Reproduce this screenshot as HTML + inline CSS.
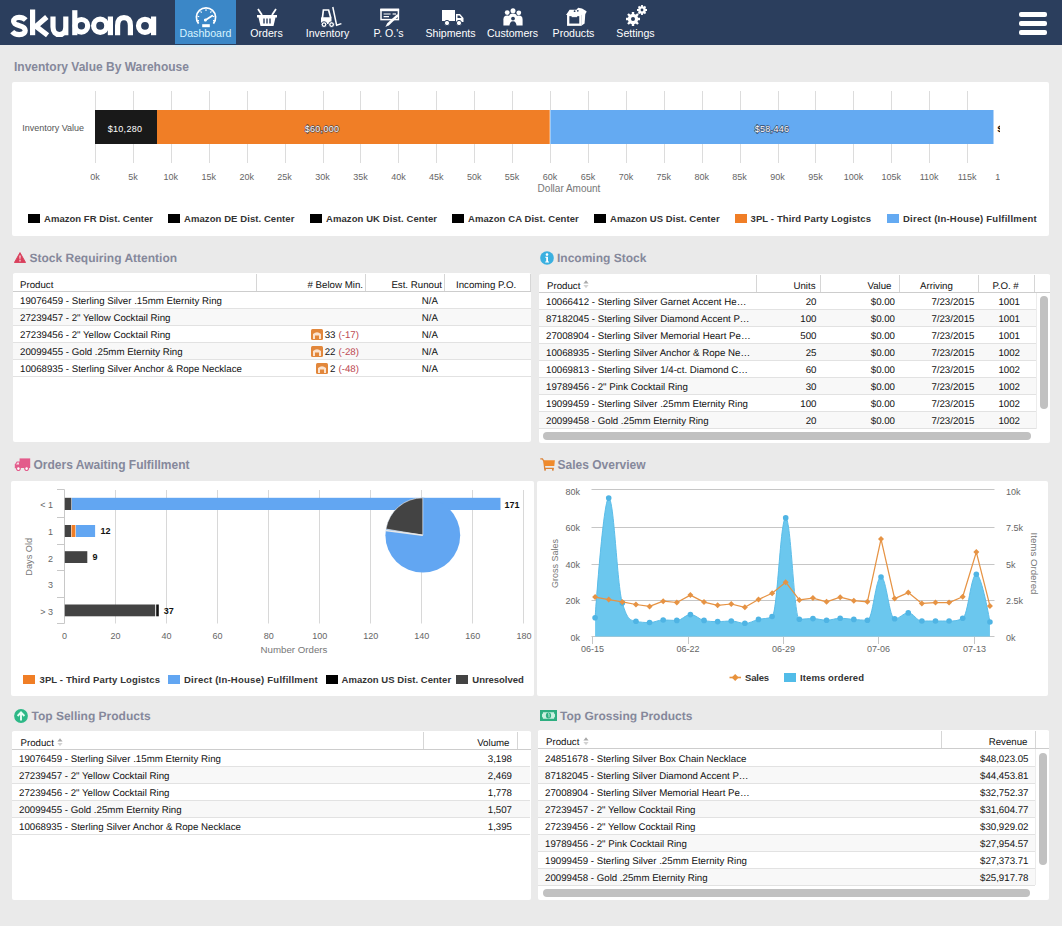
<!DOCTYPE html>
<html><head><meta charset="utf-8">
<style>
*{box-sizing:border-box;margin:0;padding:0}
html,body{width:1062px;height:926px;overflow:hidden;background:#eaeaea;font-family:"Liberation Sans",sans-serif;color:#222}
.abs{position:absolute}
#nav{position:absolute;left:0;top:0;width:1062px;height:45px;background:#2b3e5d}
.tab{position:absolute;top:0;width:61px;height:44px;color:#fff;font-size:10.6px;text-align:center}
.tab span{position:absolute;left:0;right:0;top:27px;line-height:12px;white-space:nowrap}
.tab svg{position:absolute}
.logo{position:absolute;left:10px;top:-1px;font-weight:bold;font-size:37px;color:#fff;letter-spacing:-0.6px}
.ham{position:absolute;left:1019px;width:28px;height:5px;background:#fff;border-radius:2px}
.title{position:absolute;font-weight:bold;font-size:12px;color:#85889b;white-space:nowrap;line-height:14px}
.panel{position:absolute;background:#fff;border-radius:2px}
.t{position:absolute;white-space:nowrap}
.lg{position:absolute;font-weight:bold;font-size:9.5px;color:#333;white-space:nowrap;line-height:11px}
.sq{position:absolute;width:12px;height:9px}
.tbl{position:absolute;font-size:9.7px;color:#111;text-rendering:geometricPrecision}
.row{position:absolute;left:0;height:17px;border-bottom:1px solid #dedede}
.row.alt{background:#f9f9f9}
.c{position:absolute;top:0;line-height:17px;white-space:nowrap}
.hd{position:absolute;top:0;height:17px;border-bottom:1px solid #cfcfcf;background:#fff}
.vd{position:absolute;top:0;width:1px;height:17px;background:#dadada}
.r{text-align:right}
.red{color:#c9403a}
.gar{position:absolute;width:12px;height:11px;background:#e4883a;border-radius:2px}
.scr{position:absolute;background:#c1c1c1;border-radius:5px}
</style></head><body>
<div id="nav">
  <svg class="abs" style="left:0;top:0" width="170" height="45" viewBox="0 0 170 45"><g fill="none" stroke="#fff" stroke-width="5.2" stroke-linecap="butt">
<path d="M25.8 20 C24 18.2 21.6 17.3 19 17.3 C15.6 17.3 13.6 19 13.6 21.3 C13.6 23.8 16.2 24.8 19.6 25.7 C23 26.6 25.2 27.9 25.2 30.6 C25.2 33.1 23 34.6 19.2 34.6 C16.2 34.6 13.8 33.5 12.2 31.6"/>
<path d="M32.6 9.5 V35.2"/><path d="M46.8 17 L36 26.3 L47.6 35.2"/>
<path d="M53 16.5 V27 C53 32 55.8 34.5 59.4 34.5 C63 34.5 65.8 32 65.8 27 V16.5 M65.8 20 V35.2"/>
<path d="M74.8 10.2 V35.2"/><circle cx="81.4" cy="25.8" r="6.3"/>
<circle cx="100.2" cy="25.8" r="6.6"/><path d="M110.4 16.5 V35.2"/>
<path d="M117.6 35.2 V25.5 C117.6 19.8 120.4 17.6 124 17.6 C127.6 17.6 130.4 19.8 130.4 25.5 V35.2"/>
<circle cx="145" cy="25.8" r="6.5"/><path d="M153.6 16.5 V35.2"/>
</g></svg>
  <div class="tab" style="left:175px;background:#3b87c7;width:61px;color:#d8f4ff"><svg style="left:20px;top:7px" width="22" height="21" viewBox="0 0 22 21"><path d="M3.6 16.6 A9.6 9.6 0 1 1 18.4 16.6" fill="none" stroke="#fff" stroke-width="1.7"/><g stroke="#fff" stroke-width="1.1"><path d="M11 2.2 V4 M5.6 4.4 L6.6 5.6 M16.4 4.4 L15.4 5.6 M2.6 9.2 L4.2 9.8 M19.4 9.2 L17.8 9.8 M2.3 13.6 H4 M19.7 13.6 H18"/></g><path d="M10.2 13.2 L17.2 8.8" stroke="#fff" stroke-width="1.9" stroke-linecap="round"/><circle cx="10.4" cy="13" r="1.5" fill="#fff"/><rect x="7.2" y="17.2" width="7.6" height="3" fill="#fff"/></svg><span>Dashboard</span></div>
  <div class="tab" style="left:236px"><svg style="left:20px;top:8px" width="22" height="18" viewBox="0 0 22 18"><path d="M6 7 L2 1 M16 7 L20 1" stroke="#fff" stroke-width="1.8"/><path d="M1 7 H21 V9.5 H19.5 L17.5 18 H4.5 L2.5 9.5 H1 Z" fill="#fff"/><path d="M8 10.5 V15.5 M11 10.5 V15.5 M14 10.5 V15.5" stroke="#2b3e5d" stroke-width="1.4"/></svg><span>Orders</span></div>
  <div class="tab" style="left:297px"><svg style="left:23px;top:6px" width="22" height="22" viewBox="0 0 22 22"><path d="M2.4 12 L3.4 4 H8.6 L10.8 12" fill="none" stroke="#fff" stroke-width="1.7"/><rect x="1" y="11.2" width="10.5" height="6.8" rx="0.8" fill="#fff"/><circle cx="4" cy="18.6" r="2.9" fill="#fff" stroke="#2b3e5d" stroke-width="0.9"/><circle cx="11.6" cy="18.6" r="2.9" fill="#fff" stroke="#2b3e5d" stroke-width="0.9"/><circle cx="4" cy="18.6" r="1.1" fill="#2b3e5d"/><circle cx="11.6" cy="18.6" r="1.1" fill="#2b3e5d"/><path d="M12.8 1 L16.6 19.2 L21.4 17.6" fill="none" stroke="#fff" stroke-width="1.5"/></svg><span>Inventory</span></div>
  <div class="tab" style="left:358px"><svg style="left:22px;top:8px" width="20" height="20" viewBox="0 0 20 20"><rect x="1" y="1.6" width="17.4" height="10" fill="none" stroke="#fff" stroke-width="1.5"/><rect x="0.3" y="0.6" width="18.8" height="2.6" fill="#fff"/><path d="M3.6 6 H10.6 M3.6 8.6 H9" stroke="#fff" stroke-width="1.2"/><path d="M12.6 6 H16" stroke="#fff" stroke-width="1.2"/><path d="M17.4 7.6 L8.4 16" stroke="#fff" stroke-width="2.6" stroke-linecap="round"/><path d="M7.2 15.2 L9.2 17 L5.4 19 Z" fill="#fff"/></svg><span>P. O.'s</span></div>
  <div class="tab" style="left:420px"><svg style="left:22px;top:10px" width="22" height="16" viewBox="0 0 22 16"><rect x="0" y="0" width="13" height="11" fill="#fff"/><path d="M14 4 H18 L21.5 8 V12 H14 Z" fill="#fff"/><path d="M15.5 5.5 H17.5 L19.5 8 H15.5 Z" fill="#2b3e5d"/><circle cx="5" cy="13" r="2.6" fill="#fff" stroke="#2b3e5d" stroke-width="1"/><circle cx="17" cy="13" r="2.6" fill="#fff" stroke="#2b3e5d" stroke-width="1"/></svg><span>Shipments</span></div>
  <div class="tab" style="left:482px"><svg style="left:21px;top:8px" width="20" height="19" viewBox="0 0 20 19"><g fill="#fff"><circle cx="4.2" cy="4.6" r="2.4"/><circle cx="15.8" cy="4.8" r="2.4"/><circle cx="10" cy="2.8" r="2.5"/><path d="M0.4 17.6 V11.6 Q0.4 7.4 4.2 7.4 Q8 7.4 8 11.6 V17.6 Z"/><path d="M12 17.6 V11.8 Q12 7.6 15.8 7.6 Q19.6 7.6 19.6 11.8 V17.6 Z"/><path d="M5.8 16 V9.6 Q5.8 5.6 10 5.6 Q14.2 5.6 14.2 9.6 V16 Z"/></g><g fill="#2b3e5d"><circle cx="10" cy="10.6" r="1.9"/><path d="M6.4 19 Q6.4 13.2 10 13.2 Q13.6 13.2 13.6 19 Z"/></g></svg><span>Customers</span></div>
  <div class="tab" style="left:543px"><svg style="left:22px;top:7px" width="23" height="20" viewBox="0 0 23 20"><rect x="3.2" y="8" width="12.2" height="9.7" fill="none" stroke="#fff" stroke-width="2.3"/><path d="M16.4 7 L20.4 5.4 L19.6 16.4 L16.4 18.8 Z" fill="#fff"/><path d="M1 8 L4.6 2.8 H11.4 L13.2 0.8 L17 1.6 L21.6 4.2 L21 6.2 L16.4 8 Z" fill="#fff"/><circle cx="9.6" cy="4.2" r="0.9" fill="#2b3e5d"/><circle cx="12.8" cy="3.8" r="0.9" fill="#2b3e5d"/><path d="M6.6 9.6 H12.2" stroke="#fff" stroke-width="1.1"/></svg><span>Products</span></div>
  <div class="tab" style="left:605px"><svg style="left:20px;top:4px" width="23" height="23" viewBox="0 0 23 23"><g fill="#fff"><circle cx="8" cy="15" r="5.2"/><circle cx="17" cy="6" r="3.8"/></g><g stroke="#fff" stroke-width="2.4"><path d="M8 8 V22 M1 15 H15 M3 10 L13 20 M13 10 L3 20"/></g><g stroke="#fff" stroke-width="1.8"><path d="M17 1 V11 M12 6 H22 M13.5 2.5 L20.5 9.5 M20.5 2.5 L13.5 9.5"/></g><circle cx="8" cy="15" r="2" fill="#2b3e5d"/><circle cx="17" cy="6" r="1.4" fill="#2b3e5d"/></svg><span>Settings</span></div>
  <div class="abs" style="left:175px;top:45px;width:61px;height:2px;background:#d9ecf4"></div><div class="ham" style="top:12px"></div><div class="ham" style="top:21px"></div><div class="ham" style="top:30px"></div>
</div>

<!-- Inventory value by warehouse -->
<div class="title" style="left:14px;top:60px">Inventory Value By Warehouse</div>
<div class="panel" style="left:12px;top:82px;width:1037px;height:154px"></div>
<svg class="abs" style="left:0;top:0" width="1062" height="240" font-family="Liberation Sans, sans-serif"><defs><clipPath id="clip1"><rect x="0" y="0" width="1000" height="240"/></clipPath></defs>
  <g stroke="#dcdcdc" stroke-width="1"><line x1="95.5" y1="91" x2="95.5" y2="163"/><line x1="133.5" y1="91" x2="133.5" y2="163"/><line x1="171.5" y1="91" x2="171.5" y2="163"/><line x1="209.5" y1="91" x2="209.5" y2="163"/><line x1="247.5" y1="91" x2="247.5" y2="163"/><line x1="285.5" y1="91" x2="285.5" y2="163"/><line x1="323.5" y1="91" x2="323.5" y2="163"/><line x1="360.5" y1="91" x2="360.5" y2="163"/><line x1="398.5" y1="91" x2="398.5" y2="163"/><line x1="436.5" y1="91" x2="436.5" y2="163"/><line x1="474.5" y1="91" x2="474.5" y2="163"/><line x1="512.5" y1="91" x2="512.5" y2="163"/><line x1="550.5" y1="91" x2="550.5" y2="163"/><line x1="588.5" y1="91" x2="588.5" y2="163"/><line x1="626.5" y1="91" x2="626.5" y2="163"/><line x1="664.5" y1="91" x2="664.5" y2="163"/><line x1="702.5" y1="91" x2="702.5" y2="163"/><line x1="740.5" y1="91" x2="740.5" y2="163"/><line x1="778.5" y1="91" x2="778.5" y2="163"/><line x1="815.5" y1="91" x2="815.5" y2="163"/><line x1="853.5" y1="91" x2="853.5" y2="163"/><line x1="891.5" y1="91" x2="891.5" y2="163"/><line x1="929.5" y1="91" x2="929.5" y2="163"/><line x1="967.5" y1="91" x2="967.5" y2="163"/></g>
  <text x="84" y="131" font-size="9" fill="#555" text-anchor="end">Inventory Value</text>
  <rect x="95" y="110" width="62" height="34" fill="#191919"/>
  <rect x="157" y="110" width="393" height="34" fill="#f07e26"/>
  <rect x="550" y="110" width="443.5" height="34" fill="#64aaf2"/><rect x="549.6" y="110" width="0.9" height="34" fill="#fff" fill-opacity="0.7"/>
  <text x="125" y="132" font-size="9" fill="#fff" text-anchor="middle" letter-spacing="0.3">$10,280</text>
  <text x="322" y="132" font-size="9" fill="#fff" text-anchor="middle" stroke="#3a3a48" stroke-width="1.3" stroke-opacity="0.85" paint-order="stroke" letter-spacing="0.3">$60,000</text>
  <text x="772" y="132" font-size="9" fill="#fff" text-anchor="middle" stroke="#2d3850" stroke-width="1.3" stroke-opacity="0.85" paint-order="stroke" letter-spacing="0.3">$58,446</text>
  <text x="997.5" y="132" font-size="9" font-weight="bold" fill="#000" clip-path="url(#clip1)">$</text>
  <g font-size="9" fill="#666" text-anchor="middle" clip-path="url(#clip1)"><text x="95.0" y="179.5">0k</text><text x="132.9" y="179.5">5k</text><text x="170.8" y="179.5">10k</text><text x="208.8" y="179.5">15k</text><text x="246.7" y="179.5">20k</text><text x="284.6" y="179.5">25k</text><text x="322.5" y="179.5">30k</text><text x="360.4" y="179.5">35k</text><text x="398.4" y="179.5">40k</text><text x="436.3" y="179.5">45k</text><text x="474.2" y="179.5">50k</text><text x="512.1" y="179.5">55k</text><text x="550.0" y="179.5">60k</text><text x="588.0" y="179.5">65k</text><text x="625.9" y="179.5">70k</text><text x="663.8" y="179.5">75k</text><text x="701.7" y="179.5">80k</text><text x="739.6" y="179.5">85k</text><text x="777.6" y="179.5">90k</text><text x="815.5" y="179.5">95k</text><text x="853.4" y="179.5">100k</text><text x="891.3" y="179.5">105k</text><text x="929.2" y="179.5">110k</text><text x="967.2" y="179.5">115k</text><text x="1005.1" y="179.5">120k</text></g>
  <text x="569" y="192" font-size="10" fill="#777" text-anchor="middle">Dollar Amount</text>
</svg>
<div class="sq" style="left:28px;top:214px;background:#000"></div><div class="lg" style="left:44px;top:213px;letter-spacing:0.04px">Amazon FR Dist. Center</div>
<div class="sq" style="left:168px;top:214px;background:#000"></div><div class="lg" style="left:184px;top:213px;letter-spacing:0.08px">Amazon DE Dist. Center</div>
<div class="sq" style="left:310px;top:214px;background:#000"></div><div class="lg" style="left:326px;top:213px;letter-spacing:0.08px">Amazon UK Dist. Center</div>
<div class="sq" style="left:452px;top:214px;background:#000"></div><div class="lg" style="left:468px;top:213px;letter-spacing:0.085px">Amazon CA Dist. Center</div>
<div class="sq" style="left:594px;top:214px;background:#000"></div><div class="lg" style="left:610px;top:213px;letter-spacing:0.04px">Amazon US Dist. Center</div>
<div class="sq" style="left:734.5px;top:214px;background:#f07e26"></div><div class="lg" style="left:750.5px;top:213px;letter-spacing:0.12px">3PL - Third Party Logistcs</div>
<div class="sq" style="left:887px;top:214px;background:#64aaf2"></div><div class="lg" style="left:903px;top:213px;letter-spacing:0.23px">Direct (In-House) Fulfillment</div>

<div class="tbl" style="left:0;top:0;width:1062px;height:926px">
<div class="title" style="left:29.5px;top:251px">Stock Requiring Attention</div>
<div class="panel" style="left:13px;top:273px;width:518px;height:169px"></div>
<div class="abs" style="left:13px;top:274px;width:518px;height:17px;background:#fff"></div>
<div class="abs" style="left:13px;top:291px;width:518px;height:1px;background:#cdcdcd"></div>
<div class="abs" style="left:256px;top:274px;width:1px;height:17px;background:#d6d6d6"></div>
<div class="abs" style="left:365px;top:274px;width:1px;height:17px;background:#d6d6d6"></div>
<div class="abs" style="left:444px;top:274px;width:1px;height:17px;background:#d6d6d6"></div>
<div class="abs" style="left:530px;top:274px;width:1px;height:17px;background:#d6d6d6"></div>
<div class="c" style="left:20px;top:277px;line-height:17px;font-size:9.7px">Product</div>
<div class="c" style="right:699px;top:277px;line-height:17px;font-size:9.7px"># Below Min.</div>
<div class="c" style="right:620px;top:277px;line-height:17px;font-size:9.7px">Est. Runout</div>
<div class="c" style="left:456px;top:277px;line-height:17px;font-size:9.7px">Incoming P.O.</div>
<div class="abs" style="left:13px;top:292px;width:518px;height:16px;background:#fff"></div>
<div class="abs" style="left:13px;top:308px;width:518px;height:1px;background:#e2e2e2"></div>
<div class="abs" style="left:13px;top:309px;width:518px;height:16px;background:#f8f8f8"></div>
<div class="abs" style="left:13px;top:325px;width:518px;height:1px;background:#e2e2e2"></div>
<div class="abs" style="left:13px;top:326px;width:518px;height:16px;background:#fff"></div>
<div class="abs" style="left:13px;top:342px;width:518px;height:1px;background:#e2e2e2"></div>
<div class="abs" style="left:13px;top:343px;width:518px;height:16px;background:#f8f8f8"></div>
<div class="abs" style="left:13px;top:359px;width:518px;height:1px;background:#e2e2e2"></div>
<div class="abs" style="left:13px;top:360px;width:518px;height:16px;background:#fff"></div>
<div class="abs" style="left:13px;top:376px;width:518px;height:1px;background:#e2e2e2"></div>
<div class="c" style="left:20px;top:292.5px;">19076459 - Sterling Silver .15mm Eternity Ring</div>
<div class="c" style="right:624px;top:292.5px;">N/A</div>
<div class="c" style="left:20px;top:309.5px;">27239457 - 2" Yellow Cocktail Ring</div>
<div class="c" style="right:624px;top:309.5px;">N/A</div>
<div class="c" style="left:20px;top:326.5px;">27239456 - 2" Yellow Cocktail Ring</div>
<div class="c" style="right:726.5px;top:326.5px;">33</div>
<div class="c" style="right:703px;top:326.5px;color:#bd4a52">(-17)</div>
<div class="c" style="right:624px;top:326.5px;">N/A</div>
<div class="c" style="left:20px;top:343.5px;">20099455 - Gold .25mm Eternity Ring</div>
<div class="c" style="right:726.5px;top:343.5px;">22</div>
<div class="c" style="right:703px;top:343.5px;color:#bd4a52">(-28)</div>
<div class="c" style="right:624px;top:343.5px;">N/A</div>
<div class="c" style="left:20px;top:360.5px;">10068935 - Sterling Silver Anchor &amp; Rope Necklace</div>
<div class="c" style="right:726.5px;top:360.5px;">2</div>
<div class="c" style="right:703px;top:360.5px;color:#bd4a52">(-48)</div>
<div class="c" style="right:624px;top:360.5px;">N/A</div>
<svg class="abs" style="left:311px;top:329px" width="12" height="11" viewBox="0 0 12 11"><rect width="12" height="11" rx="1.5" fill="#e2873b"/><path d="M2 10 V5 Q6 1.5 10 5 V10 Z" fill="#fbe3cf"/><rect x="4" y="6.5" width="4" height="3.5" fill="#e2873b"/></svg>
<svg class="abs" style="left:311px;top:346px" width="12" height="11" viewBox="0 0 12 11"><rect width="12" height="11" rx="1.5" fill="#e2873b"/><path d="M2 10 V5 Q6 1.5 10 5 V10 Z" fill="#fbe3cf"/><rect x="4" y="6.5" width="4" height="3.5" fill="#e2873b"/></svg>
<svg class="abs" style="left:316px;top:363px" width="12" height="11" viewBox="0 0 12 11"><rect width="12" height="11" rx="1.5" fill="#e2873b"/><path d="M2 10 V5 Q6 1.5 10 5 V10 Z" fill="#fbe3cf"/><rect x="4" y="6.5" width="4" height="3.5" fill="#e2873b"/></svg>
<svg class="abs" style="left:14px;top:252px" width="12" height="11" viewBox="0 0 12 11"><path d="M6 0.6 L11.6 10.5 H0.4 Z" fill="#d9405c" stroke="#d9405c" stroke-linejoin="round" stroke-width="0.9"/><path d="M5.4 3.6 H6.6 L6.3 7.4 H5.7 Z" fill="#fff"/><rect x="5.4" y="8.2" width="1.2" height="1.2" fill="#fff"/></svg>
<div class="title" style="left:557px;top:251px">Incoming Stock</div>
<div class="panel" style="left:539px;top:274px;width:511px;height:169px"></div>
<svg class="abs" style="left:540px;top:251px" width="14" height="14" viewBox="0 0 14 14"><circle cx="7" cy="7" r="6.8" fill="#3bb0e0"/><circle cx="7" cy="3.6" r="1.3" fill="#fff"/><path d="M5.3 5.8 H8 V10.6 H9 V11.6 H5.2 V10.6 H6.2 V6.8 H5.3 Z" fill="#fff"/></svg>
<div class="abs" style="left:539px;top:275px;width:511px;height:17px;background:#fff"></div>
<div class="abs" style="left:539px;top:292px;width:511px;height:1px;background:#cdcdcd"></div>
<div class="abs" style="left:756px;top:275px;width:1px;height:17px;background:#d6d6d6"></div>
<div class="abs" style="left:820px;top:275px;width:1px;height:17px;background:#d6d6d6"></div>
<div class="abs" style="left:899px;top:275px;width:1px;height:17px;background:#d6d6d6"></div>
<div class="abs" style="left:978px;top:275px;width:1px;height:17px;background:#d6d6d6"></div>
<div class="abs" style="left:1034px;top:275px;width:1px;height:17px;background:#d6d6d6"></div>
<div class="c" style="left:547px;top:278px;line-height:17px;font-size:9.7px">Product</div>
<div class="c" style="right:246.5px;top:278px;line-height:17px;font-size:9.7px">Units</div>
<div class="c" style="right:170.5px;top:278px;line-height:17px;font-size:9.7px">Value</div>
<div class="c" style="left:920px;top:278px;line-height:17px;font-size:9.7px">Arriving</div>
<div class="c" style="left:992.5px;top:278px;line-height:17px;font-size:9.7px">P.O. #</div>
<div class="abs" style="left:539px;top:293px;width:497px;height:16px;background:#fff"></div>
<div class="abs" style="left:539px;top:309px;width:497px;height:1px;background:#e2e2e2"></div>
<div class="abs" style="left:539px;top:310px;width:497px;height:16px;background:#f8f8f8"></div>
<div class="abs" style="left:539px;top:326px;width:497px;height:1px;background:#e2e2e2"></div>
<div class="abs" style="left:539px;top:327px;width:497px;height:16px;background:#fff"></div>
<div class="abs" style="left:539px;top:343px;width:497px;height:1px;background:#e2e2e2"></div>
<div class="abs" style="left:539px;top:344px;width:497px;height:16px;background:#f8f8f8"></div>
<div class="abs" style="left:539px;top:360px;width:497px;height:1px;background:#e2e2e2"></div>
<div class="abs" style="left:539px;top:361px;width:497px;height:16px;background:#fff"></div>
<div class="abs" style="left:539px;top:377px;width:497px;height:1px;background:#e2e2e2"></div>
<div class="abs" style="left:539px;top:378px;width:497px;height:16px;background:#f8f8f8"></div>
<div class="abs" style="left:539px;top:394px;width:497px;height:1px;background:#e2e2e2"></div>
<div class="abs" style="left:539px;top:395px;width:497px;height:16px;background:#fff"></div>
<div class="abs" style="left:539px;top:411px;width:497px;height:1px;background:#e2e2e2"></div>
<div class="abs" style="left:539px;top:412px;width:497px;height:16px;background:#f8f8f8"></div>
<div class="abs" style="left:539px;top:428px;width:497px;height:1px;background:#e2e2e2"></div>
<div class="c" style="left:546px;top:293.5px;">10066412 - Sterling Silver Garnet Accent He…</div>
<div class="c" style="right:245.5px;top:293.5px;">20</div>
<div class="c" style="right:167px;top:293.5px;">$0.00</div>
<div class="c" style="right:87.5px;top:293.5px;">7/23/2015</div>
<div class="c" style="right:42px;top:293.5px;">1001</div>
<div class="c" style="left:546px;top:310.5px;">87182045 - Sterling Silver Diamond Accent P…</div>
<div class="c" style="right:245.5px;top:310.5px;">100</div>
<div class="c" style="right:167px;top:310.5px;">$0.00</div>
<div class="c" style="right:87.5px;top:310.5px;">7/23/2015</div>
<div class="c" style="right:42px;top:310.5px;">1001</div>
<div class="c" style="left:546px;top:327.5px;">27008904 - Sterling Silver Memorial Heart Pe…</div>
<div class="c" style="right:245.5px;top:327.5px;">500</div>
<div class="c" style="right:167px;top:327.5px;">$0.00</div>
<div class="c" style="right:87.5px;top:327.5px;">7/23/2015</div>
<div class="c" style="right:42px;top:327.5px;">1001</div>
<div class="c" style="left:546px;top:344.5px;">10068935 - Sterling Silver Anchor &amp; Rope Ne…</div>
<div class="c" style="right:245.5px;top:344.5px;">25</div>
<div class="c" style="right:167px;top:344.5px;">$0.00</div>
<div class="c" style="right:87.5px;top:344.5px;">7/23/2015</div>
<div class="c" style="right:42px;top:344.5px;">1002</div>
<div class="c" style="left:546px;top:361.5px;">10069813 - Sterling Silver 1/4-ct. Diamond C…</div>
<div class="c" style="right:245.5px;top:361.5px;">60</div>
<div class="c" style="right:167px;top:361.5px;">$0.00</div>
<div class="c" style="right:87.5px;top:361.5px;">7/23/2015</div>
<div class="c" style="right:42px;top:361.5px;">1002</div>
<div class="c" style="left:546px;top:378.5px;">19789456 - 2" Pink Cocktail Ring</div>
<div class="c" style="right:245.5px;top:378.5px;">30</div>
<div class="c" style="right:167px;top:378.5px;">$0.00</div>
<div class="c" style="right:87.5px;top:378.5px;">7/23/2015</div>
<div class="c" style="right:42px;top:378.5px;">1002</div>
<div class="c" style="left:546px;top:395.5px;">19099459 - Sterling Silver .25mm Eternity Ring</div>
<div class="c" style="right:245.5px;top:395.5px;">100</div>
<div class="c" style="right:167px;top:395.5px;">$0.00</div>
<div class="c" style="right:87.5px;top:395.5px;">7/23/2015</div>
<div class="c" style="right:42px;top:395.5px;">1002</div>
<div class="c" style="left:546px;top:412.5px;">20099458 - Gold .25mm Eternity Ring</div>
<div class="c" style="right:245.5px;top:412.5px;">20</div>
<div class="c" style="right:167px;top:412.5px;">$0.00</div>
<div class="c" style="right:87.5px;top:412.5px;">7/23/2015</div>
<div class="c" style="right:42px;top:412.5px;">1002</div>
<div class="abs" style="left:1036px;top:293px;width:1px;height:136px;background:#ececec"></div>
<div class="scr" style="left:1040px;top:296px;width:8px;height:113px"></div>
<div class="scr" style="left:543px;top:432px;width:488px;height:8px"></div>
<svg class="abs" style="left:583px;top:280px" width="6" height="9" viewBox="0 0 6 9"><path d="M3 0.3 L5.6 3.6 H0.4 Z" fill="#a9a9a9"/><path d="M3 8.2 L5.6 4.9 H0.4 Z" fill="#d2d2d2"/></svg>
<div class="title" style="left:31.5px;top:709px">Top Selling Products</div>
<div class="panel" style="left:12px;top:731px;width:519px;height:169px"></div>
<svg class="abs" style="left:14px;top:709px" width="14" height="14" viewBox="0 0 14 14"><circle cx="7" cy="7" r="6.9" fill="#2db887"/><path d="M7 11.6 V4 M3.6 7 L7 3.3 L10.4 7" fill="none" stroke="#e6fff4" stroke-width="1.9" stroke-linecap="butt" stroke-linejoin="miter"/></svg>
<div class="abs" style="left:12px;top:732px;width:519px;height:17px;background:#fff"></div>
<div class="abs" style="left:12px;top:749px;width:519px;height:1px;background:#cdcdcd"></div>
<div class="abs" style="left:423px;top:732px;width:1px;height:17px;background:#d6d6d6"></div>
<div class="abs" style="left:517px;top:732px;width:1px;height:17px;background:#d6d6d6"></div>
<div class="c" style="left:20.5px;top:735px;line-height:17px;font-size:9.7px">Product</div>
<div class="c" style="right:552.5px;top:735px;line-height:17px;font-size:9.7px">Volume</div>
<div class="abs" style="left:12px;top:750px;width:518px;height:16px;background:#fff"></div>
<div class="abs" style="left:12px;top:766px;width:518px;height:1px;background:#e2e2e2"></div>
<div class="abs" style="left:12px;top:767px;width:518px;height:16px;background:#f8f8f8"></div>
<div class="abs" style="left:12px;top:783px;width:518px;height:1px;background:#e2e2e2"></div>
<div class="abs" style="left:12px;top:784px;width:518px;height:16px;background:#fff"></div>
<div class="abs" style="left:12px;top:800px;width:518px;height:1px;background:#e2e2e2"></div>
<div class="abs" style="left:12px;top:801px;width:518px;height:16px;background:#f8f8f8"></div>
<div class="abs" style="left:12px;top:817px;width:518px;height:1px;background:#e2e2e2"></div>
<div class="abs" style="left:12px;top:818px;width:518px;height:16px;background:#fff"></div>
<div class="abs" style="left:12px;top:834px;width:518px;height:1px;background:#e2e2e2"></div>
<div class="c" style="left:19px;top:750.5px;">19076459 - Sterling Silver .15mm Eternity Ring</div>
<div class="c" style="right:550px;top:750.5px;">3,198</div>
<div class="c" style="left:19px;top:767.5px;">27239457 - 2" Yellow Cocktail Ring</div>
<div class="c" style="right:550px;top:767.5px;">2,469</div>
<div class="c" style="left:19px;top:784.5px;">27239456 - 2" Yellow Cocktail Ring</div>
<div class="c" style="right:550px;top:784.5px;">1,778</div>
<div class="c" style="left:19px;top:801.5px;">20099455 - Gold .25mm Eternity Ring</div>
<div class="c" style="right:550px;top:801.5px;">1,507</div>
<div class="c" style="left:19px;top:818.5px;">10068935 - Sterling Silver Anchor &amp; Rope Necklace</div>
<div class="c" style="right:550px;top:818.5px;">1,395</div>
<svg class="abs" style="left:57px;top:738px" width="6" height="9" viewBox="0 0 6 9"><path d="M3 0.3 L5.6 3.6 H0.4 Z" fill="#a9a9a9"/><path d="M3 8.2 L5.6 4.9 H0.4 Z" fill="#d2d2d2"/></svg>
<div class="title" style="left:560px;top:709px">Top Grossing Products</div>
<div class="panel" style="left:538px;top:730px;width:511px;height:170px"></div>
<svg class="abs" style="left:540px;top:710px" width="17" height="11" viewBox="0 0 17 11"><rect x="0" y="0" width="17" height="11" fill="#2eae80"/><path d="M3 2.2 H14 Q14 4 15 4.3 V6.7 Q14 7 14 8.8 H3 Q3 7 2 6.7 V4.3 Q3 4 3 2.2 Z" fill="#c9f0df"/><ellipse cx="8.5" cy="5.5" rx="2.6" ry="3" fill="#2eae80"/><path d="M8 3.8 H9 V7.4" stroke="#c9f0df" stroke-width="0.9" fill="none"/></svg>
<div class="abs" style="left:538px;top:731px;width:511px;height:17px;background:#fff"></div>
<div class="abs" style="left:538px;top:748px;width:511px;height:1px;background:#cdcdcd"></div>
<div class="abs" style="left:941px;top:731px;width:1px;height:17px;background:#d6d6d6"></div>
<div class="abs" style="left:1035px;top:731px;width:1px;height:17px;background:#d6d6d6"></div>
<div class="c" style="left:546px;top:734px;line-height:17px;font-size:9.7px">Product</div>
<div class="c" style="right:34.5px;top:734px;line-height:17px;font-size:9.7px">Revenue</div>
<div class="abs" style="left:538px;top:750px;width:497px;height:16px;background:#fff"></div>
<div class="abs" style="left:538px;top:766px;width:497px;height:1px;background:#e2e2e2"></div>
<div class="abs" style="left:538px;top:767px;width:497px;height:16px;background:#f8f8f8"></div>
<div class="abs" style="left:538px;top:783px;width:497px;height:1px;background:#e2e2e2"></div>
<div class="abs" style="left:538px;top:784px;width:497px;height:16px;background:#fff"></div>
<div class="abs" style="left:538px;top:800px;width:497px;height:1px;background:#e2e2e2"></div>
<div class="abs" style="left:538px;top:801px;width:497px;height:16px;background:#f8f8f8"></div>
<div class="abs" style="left:538px;top:817px;width:497px;height:1px;background:#e2e2e2"></div>
<div class="abs" style="left:538px;top:818px;width:497px;height:16px;background:#fff"></div>
<div class="abs" style="left:538px;top:834px;width:497px;height:1px;background:#e2e2e2"></div>
<div class="abs" style="left:538px;top:835px;width:497px;height:16px;background:#f8f8f8"></div>
<div class="abs" style="left:538px;top:851px;width:497px;height:1px;background:#e2e2e2"></div>
<div class="abs" style="left:538px;top:852px;width:497px;height:16px;background:#fff"></div>
<div class="abs" style="left:538px;top:868px;width:497px;height:1px;background:#e2e2e2"></div>
<div class="abs" style="left:538px;top:869px;width:497px;height:16px;background:#f8f8f8"></div>
<div class="abs" style="left:538px;top:885px;width:497px;height:1px;background:#e2e2e2"></div>
<div class="c" style="left:545px;top:750.5px;">24851678 - Sterling Silver Box Chain Necklace</div>
<div class="c" style="right:33.5px;top:750.5px;">$48,023.05</div>
<div class="c" style="left:545px;top:767.5px;">87182045 - Sterling Silver Diamond Accent P…</div>
<div class="c" style="right:33.5px;top:767.5px;">$44,453.81</div>
<div class="c" style="left:545px;top:784.5px;">27008904 - Sterling Silver Memorial Heart Pe…</div>
<div class="c" style="right:33.5px;top:784.5px;">$32,752.37</div>
<div class="c" style="left:545px;top:801.5px;">27239457 - 2" Yellow Cocktail Ring</div>
<div class="c" style="right:33.5px;top:801.5px;">$31,604.77</div>
<div class="c" style="left:545px;top:818.5px;">27239456 - 2" Yellow Cocktail Ring</div>
<div class="c" style="right:33.5px;top:818.5px;">$30,929.02</div>
<div class="c" style="left:545px;top:835.5px;">19789456 - 2" Pink Cocktail Ring</div>
<div class="c" style="right:33.5px;top:835.5px;">$27,954.57</div>
<div class="c" style="left:545px;top:852.5px;">19099459 - Sterling Silver .25mm Eternity Ring</div>
<div class="c" style="right:33.5px;top:852.5px;">$27,373.71</div>
<div class="c" style="left:545px;top:869.5px;">20099458 - Gold .25mm Eternity Ring</div>
<div class="c" style="right:33.5px;top:869.5px;">$25,917.78</div>
<div class="abs" style="left:1035px;top:749px;width:1px;height:136px;background:#ececec"></div>
<div class="scr" style="left:1039px;top:753px;width:8px;height:112px"></div>
<div class="scr" style="left:543px;top:889px;width:487px;height:8px"></div>
<svg class="abs" style="left:582.5px;top:737px" width="6" height="9" viewBox="0 0 6 9"><path d="M3 0.3 L5.6 3.6 H0.4 Z" fill="#a9a9a9"/><path d="M3 8.2 L5.6 4.9 H0.4 Z" fill="#d2d2d2"/></svg>
</div><div class="title" style="left:33.5px;top:458px">Orders Awaiting Fulfillment</div>
<svg class="abs" style="left:14px;top:458px" width="17" height="13" viewBox="0 0 17 13"><rect x="5.6" y="0.4" width="10.6" height="9.6" fill="#e35b8b"/><path d="M0.8 10.2 V6.6 L2.8 3.4 H6 V10.2 Z" fill="#e35b8b"/><path d="M2 6.6 L3.4 4.5 H5 V6.6 Z" fill="#f7d9e5"/><circle cx="4.4" cy="10.6" r="1.9" fill="#fff" stroke="#e35b8b" stroke-width="1.2"/><circle cx="12.6" cy="10.6" r="1.9" fill="#fff" stroke="#e35b8b" stroke-width="1.2"/></svg>
<div class="panel" style="left:11px;top:481px;width:523px;height:215px"></div>
<svg class="abs" style="left:0;top:0" width="1062" height="926" font-family="Liberation Sans, sans-serif">
<line x1="115.5" y1="490" x2="115.5" y2="623.5" stroke="#d8d8d8" stroke-width="1"/>
<line x1="166.5" y1="490" x2="166.5" y2="623.5" stroke="#d8d8d8" stroke-width="1"/>
<line x1="217.5" y1="490" x2="217.5" y2="623.5" stroke="#d8d8d8" stroke-width="1"/>
<line x1="268.5" y1="490" x2="268.5" y2="623.5" stroke="#d8d8d8" stroke-width="1"/>
<line x1="319.5" y1="490" x2="319.5" y2="623.5" stroke="#d8d8d8" stroke-width="1"/>
<line x1="370.5" y1="490" x2="370.5" y2="623.5" stroke="#d8d8d8" stroke-width="1"/>
<line x1="421.5" y1="490" x2="421.5" y2="623.5" stroke="#d8d8d8" stroke-width="1"/>
<line x1="472.5" y1="490" x2="472.5" y2="623.5" stroke="#d8d8d8" stroke-width="1"/>
<line x1="523.5" y1="490" x2="523.5" y2="623.5" stroke="#d8d8d8" stroke-width="1"/>
<line x1="64.5" y1="489.5" x2="64.5" y2="623.5" stroke="#c8c8c8" stroke-width="1"/>
<line x1="57" y1="489.5" x2="64.5" y2="489.5" stroke="#c8c8c8" stroke-width="1"/>
<line x1="57" y1="517.5" x2="64.5" y2="517.5" stroke="#c8c8c8" stroke-width="1"/>
<line x1="57" y1="544.5" x2="64.5" y2="544.5" stroke="#c8c8c8" stroke-width="1"/>
<line x1="57" y1="570.5" x2="64.5" y2="570.5" stroke="#c8c8c8" stroke-width="1"/>
<line x1="57" y1="597.5" x2="64.5" y2="597.5" stroke="#c8c8c8" stroke-width="1"/>
<line x1="57" y1="623.5" x2="64.5" y2="623.5" stroke="#c8c8c8" stroke-width="1"/>
<rect x="64.80" y="497.8" width="6.60" height="12.199999999999989" fill="#434343"/>
<rect x="71.90" y="497.8" width="428.60" height="12.199999999999989" fill="#62a6f2"/>
<rect x="64.80" y="525" width="6.20" height="12" fill="#434343"/>
<rect x="71.50" y="525" width="3.90" height="12" fill="#f07e26"/>
<rect x="75.90" y="525" width="19.20" height="12" fill="#62a6f2"/>
<rect x="64.80" y="551.2" width="22.50" height="11.799999999999955" fill="#434343"/>
<rect x="64.80" y="604.5" width="90.40" height="11.799999999999955" fill="#434343"/>
<rect x="156.20" y="604.5" width="2.60" height="11.799999999999955" fill="#111"/>
<text x="504.5" y="507.5" font-size="9" font-weight="bold" fill="#111">171</text>
<text x="100.5" y="533.5" font-size="9" font-weight="bold" fill="#111">12</text>
<text x="92.5" y="560" font-size="9" font-weight="bold" fill="#111">9</text>
<text x="163.8" y="613.5" font-size="9" font-weight="bold" fill="#111">37</text>
<text x="53" y="508" font-size="9" fill="#666" text-anchor="end">&lt; 1</text>
<text x="53" y="534.5" font-size="9" fill="#666" text-anchor="end">1</text>
<text x="53" y="561.5" font-size="9" fill="#666" text-anchor="end">2</text>
<text x="53" y="588" font-size="9" fill="#666" text-anchor="end">3</text>
<text x="53" y="614.5" font-size="9" fill="#666" text-anchor="end">&gt; 3</text>
<text transform="translate(31.5,556.8) rotate(-90)" font-size="9.2" fill="#777" text-anchor="middle">Days Old</text>
<text x="64.5" y="638.8" font-size="9" fill="#666" text-anchor="middle">0</text>
<text x="115.5" y="638.8" font-size="9" fill="#666" text-anchor="middle">20</text>
<text x="166.6" y="638.8" font-size="9" fill="#666" text-anchor="middle">40</text>
<text x="217.6" y="638.8" font-size="9" fill="#666" text-anchor="middle">60</text>
<text x="268.7" y="638.8" font-size="9" fill="#666" text-anchor="middle">80</text>
<text x="319.7" y="638.8" font-size="9" fill="#666" text-anchor="middle">100</text>
<text x="370.7" y="638.8" font-size="9" fill="#666" text-anchor="middle">120</text>
<text x="421.8" y="638.8" font-size="9" fill="#666" text-anchor="middle">140</text>
<text x="472.8" y="638.8" font-size="9" fill="#666" text-anchor="middle">160</text>
<text x="523.9" y="638.8" font-size="9" fill="#666" text-anchor="middle">180</text>
<text x="294" y="652.5" font-size="9.7" fill="#777" text-anchor="middle">Number Orders</text>
<circle cx="422.8" cy="535.2" r="37.4" fill="#62a6f2"/>
<path d="M422.8,535.2 L385.91,529.03 A37.4,37.4 0 0 1 422.8,497.80000000000007 Z" fill="#434343" stroke="#fff" stroke-width="0.6"/>
<path d="M422.8,535.2 L385.69,530.51" stroke="#e8e8e8" stroke-width="1.6"/>
</svg>
<div class="sq" style="left:23px;top:675px;background:#f07e26"></div><div class="lg" style="left:39.5px;top:674px;letter-spacing:0.12px">3PL - Third Party Logistcs</div>
<div class="sq" style="left:168px;top:675px;background:#62a6f2"></div><div class="lg" style="left:184px;top:674px;letter-spacing:0.23px">Direct (In-House) Fulfillment</div>
<div class="sq" style="left:325.5px;top:675px;background:#000"></div><div class="lg" style="left:341.5px;top:674px;letter-spacing:0.04px">Amazon US Dist. Center</div>
<div class="sq" style="left:456.3px;top:675px;background:#434343"></div><div class="lg" style="left:472.3px;top:674px;letter-spacing:-0.03px">Unresolved</div>
<div class="title" style="left:557.5px;top:458px">Sales Overview</div>
<svg class="abs" style="left:540px;top:458px" width="16" height="14" viewBox="0 0 16 14"><path d="M0.3 0.9 H2.4 L3.9 3.2 L4.7 10.3 H13.8" fill="none" stroke="#dc8236" stroke-width="1.3"/><path d="M3.4 2.2 H14.9 L14.3 7.9 H4.3 Z" fill="#ef8a2c"/><rect x="4.2" y="10.2" width="1.7" height="2.4" fill="#dc8236"/><rect x="12" y="10.2" width="1.7" height="2.4" fill="#dc8236"/></svg>
<div class="panel" style="left:537px;top:481px;width:511px;height:215px"></div>
<svg class="abs" style="left:0;top:0" width="1062" height="926" font-family="Liberation Sans, sans-serif">
<line x1="591.5" y1="489.5" x2="994.5" y2="489.5" stroke="#c6c6c6" stroke-width="1"/>
<text x="580" y="495.4" font-size="9" fill="#666" text-anchor="end">80k</text>
<text x="1006" y="495.4" font-size="9" fill="#666">10k</text>
<line x1="591.5" y1="527.5" x2="994.5" y2="527.5" stroke="#c6c6c6" stroke-width="1"/>
<text x="580" y="530.8" font-size="9" fill="#666" text-anchor="end">60k</text>
<text x="1006" y="530.8" font-size="9" fill="#666">7.5k</text>
<line x1="591.5" y1="564.5" x2="994.5" y2="564.5" stroke="#c6c6c6" stroke-width="1"/>
<text x="580" y="567.5" font-size="9" fill="#666" text-anchor="end">40k</text>
<text x="1006" y="567.5" font-size="9" fill="#666">5k</text>
<line x1="591.5" y1="600.5" x2="994.5" y2="600.5" stroke="#c6c6c6" stroke-width="1"/>
<text x="580" y="604.1" font-size="9" fill="#666" text-anchor="end">20k</text>
<text x="1006" y="604.1" font-size="9" fill="#666">2.5k</text>
<line x1="591.5" y1="636.5" x2="994.5" y2="636.5" stroke="#c6c6c6" stroke-width="1"/>
<text x="580" y="641.0" font-size="9" fill="#666" text-anchor="end">0k</text>
<text x="1006" y="641.0" font-size="9" fill="#666">0k</text>
<text transform="translate(557.8,563.5) rotate(-90)" font-size="9" fill="#777" text-anchor="middle">Gross Sales</text>
<text transform="translate(1031,563.5) rotate(90)" font-size="9.7" fill="#777" text-anchor="middle">Items Ordered</text>
<line x1="592.5" y1="637" x2="592.5" y2="644" stroke="#c6c6c6" stroke-width="1"/>
<text x="592.5" y="651.7" font-size="9" fill="#666" text-anchor="middle">06-15</text>
<line x1="688.5" y1="637" x2="688.5" y2="644" stroke="#c6c6c6" stroke-width="1"/>
<text x="688" y="651.7" font-size="9" fill="#666" text-anchor="middle">06-22</text>
<line x1="783.5" y1="637" x2="783.5" y2="644" stroke="#c6c6c6" stroke-width="1"/>
<text x="783.6" y="651.7" font-size="9" fill="#666" text-anchor="middle">06-29</text>
<line x1="878.5" y1="637" x2="878.5" y2="644" stroke="#c6c6c6" stroke-width="1"/>
<text x="878.5" y="651.7" font-size="9" fill="#666" text-anchor="middle">07-06</text>
<line x1="974.5" y1="637" x2="974.5" y2="644" stroke="#c6c6c6" stroke-width="1"/>
<text x="974.5" y="651.7" font-size="9" fill="#666" text-anchor="middle">07-13</text>
<path d="M595.10,617.70 C595.10,617.70 603.27,498.10 608.72,498.10 C614.16,498.10 616.88,584.60 622.33,602.90 C627.78,621.20 630.50,619.90 635.95,621.20 C641.39,622.50 644.11,622.50 649.56,622.50 C655.01,622.50 657.73,620.00 663.18,620.00 C668.62,620.00 671.34,620.40 676.79,620.40 C682.24,620.40 684.96,614.60 690.40,614.60 C695.85,614.60 698.57,619.20 704.02,620.40 C709.47,621.60 712.19,621.60 717.63,621.60 C723.08,621.60 725.80,621.00 731.25,621.00 C736.70,621.00 739.42,623.30 744.87,623.30 C750.31,623.30 753.03,620.76 758.48,619.40 C763.93,618.04 766.65,619.40 772.10,616.50 C777.54,613.60 780.26,517.90 785.71,517.90 C791.16,517.90 793.88,619.20 799.33,619.20 C804.77,619.20 807.49,618.60 812.94,618.60 C818.39,618.60 821.11,620.20 826.56,620.20 C832.00,620.20 834.72,618.30 840.17,618.30 C845.62,618.30 848.34,619.02 853.79,619.40 C859.23,619.78 861.95,620.20 867.40,620.20 C872.85,620.20 875.57,577.00 881.02,577.00 C886.46,577.00 889.18,618.80 894.63,618.80 C900.08,618.80 902.80,612.90 908.25,612.90 C913.69,612.90 916.41,621.00 921.86,621.00 C927.31,621.00 930.03,621.00 935.48,621.00 C940.92,621.00 943.64,621.00 949.09,621.00 C954.54,621.00 957.26,621.00 962.71,618.30 C968.15,615.60 970.87,574.30 976.32,574.30 C981.77,574.30 989.93,622.00 989.93,622.00 L989.93,636.6 L595.10,636.6 Z" fill="#6bc7ee"/>
<path d="M595.10,617.70 C595.10,617.70 603.27,498.10 608.72,498.10 C614.16,498.10 616.88,584.60 622.33,602.90 C627.78,621.20 630.50,619.90 635.95,621.20 C641.39,622.50 644.11,622.50 649.56,622.50 C655.01,622.50 657.73,620.00 663.18,620.00 C668.62,620.00 671.34,620.40 676.79,620.40 C682.24,620.40 684.96,614.60 690.40,614.60 C695.85,614.60 698.57,619.20 704.02,620.40 C709.47,621.60 712.19,621.60 717.63,621.60 C723.08,621.60 725.80,621.00 731.25,621.00 C736.70,621.00 739.42,623.30 744.87,623.30 C750.31,623.30 753.03,620.76 758.48,619.40 C763.93,618.04 766.65,619.40 772.10,616.50 C777.54,613.60 780.26,517.90 785.71,517.90 C791.16,517.90 793.88,619.20 799.33,619.20 C804.77,619.20 807.49,618.60 812.94,618.60 C818.39,618.60 821.11,620.20 826.56,620.20 C832.00,620.20 834.72,618.30 840.17,618.30 C845.62,618.30 848.34,619.02 853.79,619.40 C859.23,619.78 861.95,620.20 867.40,620.20 C872.85,620.20 875.57,577.00 881.02,577.00 C886.46,577.00 889.18,618.80 894.63,618.80 C900.08,618.80 902.80,612.90 908.25,612.90 C913.69,612.90 916.41,621.00 921.86,621.00 C927.31,621.00 930.03,621.00 935.48,621.00 C940.92,621.00 943.64,621.00 949.09,621.00 C954.54,621.00 957.26,621.00 962.71,618.30 C968.15,615.60 970.87,574.30 976.32,574.30 C981.77,574.30 989.93,622.00 989.93,622.00" fill="none" stroke="#5bbde9" stroke-width="1"/>
<circle cx="595.10" cy="617.7" r="2.8" fill="#4fb4e4"/>
<circle cx="608.72" cy="498.1" r="2.8" fill="#4fb4e4"/>
<circle cx="622.33" cy="602.9" r="2.8" fill="#4fb4e4"/>
<circle cx="635.95" cy="621.2" r="2.8" fill="#4fb4e4"/>
<circle cx="649.56" cy="622.5" r="2.8" fill="#4fb4e4"/>
<circle cx="663.18" cy="620" r="2.8" fill="#4fb4e4"/>
<circle cx="676.79" cy="620.4" r="2.8" fill="#4fb4e4"/>
<circle cx="690.40" cy="614.6" r="2.8" fill="#4fb4e4"/>
<circle cx="704.02" cy="620.4" r="2.8" fill="#4fb4e4"/>
<circle cx="717.63" cy="621.6" r="2.8" fill="#4fb4e4"/>
<circle cx="731.25" cy="621" r="2.8" fill="#4fb4e4"/>
<circle cx="744.87" cy="623.3" r="2.8" fill="#4fb4e4"/>
<circle cx="758.48" cy="619.4" r="2.8" fill="#4fb4e4"/>
<circle cx="772.10" cy="616.5" r="2.8" fill="#4fb4e4"/>
<circle cx="785.71" cy="517.9" r="2.8" fill="#4fb4e4"/>
<circle cx="799.33" cy="619.2" r="2.8" fill="#4fb4e4"/>
<circle cx="812.94" cy="618.6" r="2.8" fill="#4fb4e4"/>
<circle cx="826.56" cy="620.2" r="2.8" fill="#4fb4e4"/>
<circle cx="840.17" cy="618.3" r="2.8" fill="#4fb4e4"/>
<circle cx="853.79" cy="619.4" r="2.8" fill="#4fb4e4"/>
<circle cx="867.40" cy="620.2" r="2.8" fill="#4fb4e4"/>
<circle cx="881.02" cy="577" r="2.8" fill="#4fb4e4"/>
<circle cx="894.63" cy="618.8" r="2.8" fill="#4fb4e4"/>
<circle cx="908.25" cy="612.9" r="2.8" fill="#4fb4e4"/>
<circle cx="921.86" cy="621" r="2.8" fill="#4fb4e4"/>
<circle cx="935.48" cy="621" r="2.8" fill="#4fb4e4"/>
<circle cx="949.09" cy="621" r="2.8" fill="#4fb4e4"/>
<circle cx="962.71" cy="618.3" r="2.8" fill="#4fb4e4"/>
<circle cx="976.32" cy="574.3" r="2.8" fill="#4fb4e4"/>
<circle cx="989.93" cy="622" r="2.8" fill="#4fb4e4"/>
<polyline points="595.10,597.1 608.72,599.6 622.33,601.9 635.95,604.5 649.56,606.4 663.18,601.2 676.79,602.5 690.40,595.1 704.02,602.1 717.63,605.3 731.25,604 744.87,607.3 758.48,599.5 772.10,593.2 785.71,582.2 799.33,599.9 812.94,598.1 826.56,601.8 840.17,597.2 853.79,600.7 867.40,601.8 881.02,539.1 894.63,598.6 908.25,592.6 921.86,603.4 935.48,602.6 949.09,602.6 962.71,596.7 976.32,552.1 989.93,605.9" fill="none" stroke="#e69344" stroke-width="1.25" stroke-linejoin="round"/>
<path d="M595.10,594.10 L598.10,597.1 L595.10,600.10 L592.10,597.1 Z" fill="#e69344"/>
<path d="M608.72,596.60 L611.72,599.6 L608.72,602.60 L605.72,599.6 Z" fill="#e69344"/>
<path d="M622.33,598.90 L625.33,601.9 L622.33,604.90 L619.33,601.9 Z" fill="#e69344"/>
<path d="M635.95,601.50 L638.95,604.5 L635.95,607.50 L632.95,604.5 Z" fill="#e69344"/>
<path d="M649.56,603.40 L652.56,606.4 L649.56,609.40 L646.56,606.4 Z" fill="#e69344"/>
<path d="M663.18,598.20 L666.18,601.2 L663.18,604.20 L660.18,601.2 Z" fill="#e69344"/>
<path d="M676.79,599.50 L679.79,602.5 L676.79,605.50 L673.79,602.5 Z" fill="#e69344"/>
<path d="M690.40,592.10 L693.40,595.1 L690.40,598.10 L687.40,595.1 Z" fill="#e69344"/>
<path d="M704.02,599.10 L707.02,602.1 L704.02,605.10 L701.02,602.1 Z" fill="#e69344"/>
<path d="M717.63,602.30 L720.63,605.3 L717.63,608.30 L714.63,605.3 Z" fill="#e69344"/>
<path d="M731.25,601.00 L734.25,604 L731.25,607.00 L728.25,604 Z" fill="#e69344"/>
<path d="M744.87,604.30 L747.87,607.3 L744.87,610.30 L741.87,607.3 Z" fill="#e69344"/>
<path d="M758.48,596.50 L761.48,599.5 L758.48,602.50 L755.48,599.5 Z" fill="#e69344"/>
<path d="M772.10,590.20 L775.10,593.2 L772.10,596.20 L769.10,593.2 Z" fill="#e69344"/>
<path d="M785.71,579.20 L788.71,582.2 L785.71,585.20 L782.71,582.2 Z" fill="#e69344"/>
<path d="M799.33,596.90 L802.33,599.9 L799.33,602.90 L796.33,599.9 Z" fill="#e69344"/>
<path d="M812.94,595.10 L815.94,598.1 L812.94,601.10 L809.94,598.1 Z" fill="#e69344"/>
<path d="M826.56,598.80 L829.56,601.8 L826.56,604.80 L823.56,601.8 Z" fill="#e69344"/>
<path d="M840.17,594.20 L843.17,597.2 L840.17,600.20 L837.17,597.2 Z" fill="#e69344"/>
<path d="M853.79,597.70 L856.79,600.7 L853.79,603.70 L850.79,600.7 Z" fill="#e69344"/>
<path d="M867.40,598.80 L870.40,601.8 L867.40,604.80 L864.40,601.8 Z" fill="#e69344"/>
<path d="M881.02,536.10 L884.02,539.1 L881.02,542.10 L878.02,539.1 Z" fill="#e69344"/>
<path d="M894.63,595.60 L897.63,598.6 L894.63,601.60 L891.63,598.6 Z" fill="#e69344"/>
<path d="M908.25,589.60 L911.25,592.6 L908.25,595.60 L905.25,592.6 Z" fill="#e69344"/>
<path d="M921.86,600.40 L924.86,603.4 L921.86,606.40 L918.86,603.4 Z" fill="#e69344"/>
<path d="M935.48,599.60 L938.48,602.6 L935.48,605.60 L932.48,602.6 Z" fill="#e69344"/>
<path d="M949.09,599.60 L952.09,602.6 L949.09,605.60 L946.09,602.6 Z" fill="#e69344"/>
<path d="M962.71,593.70 L965.71,596.7 L962.71,599.70 L959.71,596.7 Z" fill="#e69344"/>
<path d="M976.32,549.10 L979.32,552.1 L976.32,555.10 L973.32,552.1 Z" fill="#e69344"/>
<path d="M989.93,602.90 L992.93,605.9 L989.93,608.90 L986.93,605.9 Z" fill="#e69344"/>
<line x1="729.5" y1="677.5" x2="741" y2="677.5" stroke="#e8923c" stroke-width="1.6"/>
<path d="M735.2,674 L738.7,677.5 L735.2,681 L731.7,677.5 Z" fill="#e8923c"/>
</svg>
<div class="lg" style="left:745px;top:672px;letter-spacing:-0.2px">Sales</div>
<div class="sq" style="left:784px;top:673px;width:12px;height:9px;background:#52bce8"></div><div class="lg" style="left:800px;top:672px;letter-spacing:0.1px">Items ordered</div>
</body></html>
